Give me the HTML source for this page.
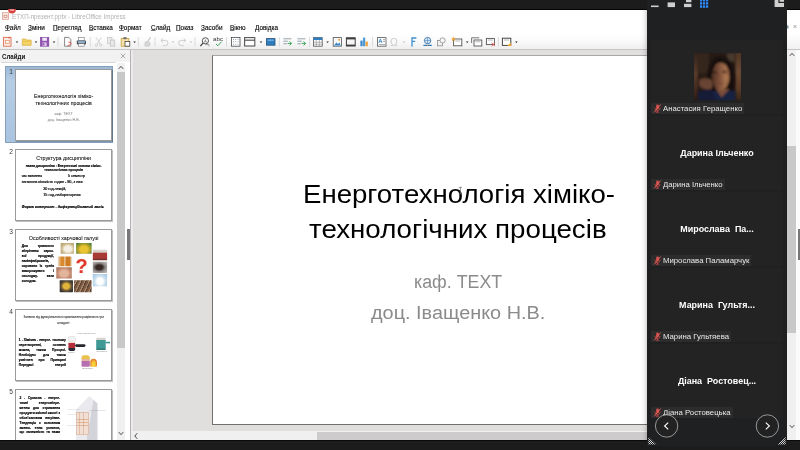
<!DOCTYPE html>
<html lang="uk">
<head>
<meta charset="utf-8">
<title>ЕТХП-презент.pptx - LibreOffice Impress</title>
<style>
html,body{margin:0;padding:0;}
body{width:800px;height:450px;overflow:hidden;background:#1c1c1c;position:relative;font-family:"Liberation Sans",sans-serif;}
.abs{position:absolute;}
#win{position:absolute;left:0;top:10px;width:800px;height:430px;background:#fff;overflow:hidden;}
#topline{position:absolute;left:0;top:9px;width:800px;height:1px;background:#050505;}
#botline{position:absolute;left:0;top:440px;width:800px;height:1px;background:#0a0a0a;}
/* coordinates inside #win are page y - 10 */
#title{position:absolute;left:12px;top:1.5px;font-size:6.9px;line-height:10px;color:#b2b2b2;white-space:nowrap;transform-origin:0 0;transform:scaleX(0.905);}
#menu{position:absolute;left:0;top:12px;width:647px;height:12px;font-size:6.4px;line-height:12px;color:#000;-webkit-text-stroke:0.12px #000;}
#menu span{position:absolute;top:0;white-space:nowrap;}
#menu u{text-decoration-thickness:0.4px;text-underline-offset:0.4px;text-decoration-color:#777;}
#tb{position:absolute;left:0;top:24px;width:800px;height:15px;background:linear-gradient(#ffffff,#fbfbfb 40%,#efefef);border-bottom:1px solid #c6c4c4;}
#tb svg{position:absolute;left:0;top:0;}
#work{position:absolute;left:131px;top:40px;width:669px;height:381px;background:#e1dfde;border-left:2px solid #ecebeb;box-sizing:border-box;}
#slide{position:absolute;left:212px;top:44.5px;width:470px;height:368px;background:#fff;border:1px solid #707070;border-top-color:#a8a6a6;box-sizing:content-box;}
.t1{position:absolute;white-space:nowrap;color:#000;font-size:26.6px;line-height:30px;transform-origin:0 0;}
.t2{position:absolute;white-space:nowrap;color:#8b8b8b;font-size:17.6px;line-height:20px;transform-origin:0 0;}
#hs{position:absolute;left:131px;top:421px;width:516px;height:9px;background:#f1f0f1;}
#hs .th{position:absolute;left:186px;top:1px;width:340px;height:8px;background:#cdcbcc;}
/* slide panel */
#sp{position:absolute;left:0;top:40px;width:130px;height:390px;background:#fff;border-right:1px solid #b4b2b2;}
#sph{position:absolute;left:0;top:0;width:130px;height:12px;background:#f3f2f2;}
#sph b{position:absolute;left:2px;top:1.5px;font-size:7.4px;line-height:10px;color:#111;transform-origin:0 0;transform:scaleX(0.83);}
#splist{position:absolute;left:1px;top:12px;width:115px;height:378px;background:#fff;border-top:1px solid #d8d8d8;}
#spsb{position:absolute;left:117px;top:13px;width:8px;height:377px;background:#f0f0f0;}
#spsb .th{position:absolute;left:0;top:9px;width:8px;height:276px;background:#c9c8c8;}
#grip{position:absolute;left:127px;top:179px;width:3px;height:31px;background:#77777a;}
.sel{position:absolute;left:5px;top:16px;width:108px;height:77px;background:linear-gradient(#9db9d6,#b6cde6 20%,#a9c4e0);border:1px solid #86a0bb;box-sizing:border-box;}
.th{box-sizing:border-box;}
.thumb{position:absolute;left:15px;width:97px;height:72.6px;background:#fff;border:1px solid #9a9a9a;box-sizing:border-box;overflow:hidden;box-shadow:0.5px 0.5px 0.5px rgba(0,0,0,.25);}
.num{position:absolute;left:7px;width:8px;font-size:6.6px;line-height:8px;color:#3a3a3a;text-align:center;}
.thumb div{position:absolute;white-space:nowrap;color:#000;transform-origin:0 0;}

.tc{position:absolute;left:0;top:0;width:480px;height:360px;transform:scale(0.1985);transform-origin:0 0;font-family:"Liberation Sans",sans-serif;}
.tc div{position:absolute;white-space:nowrap;color:#000;-webkit-text-stroke:0.9px currentColor;}
.tc .c{left:0;width:480px;text-align:center;}
.tc .ns{-webkit-text-stroke:0.25px currentColor;}
.tc .j{white-space:normal;text-align:justify;font-weight:bold;}
.tc .im{border-radius:2px;}
/* zoom panel */
#zp{position:absolute;left:647px;top:0;width:140px;height:446px;background:#1f2022;overflow:hidden;}
#zpsh{position:absolute;left:641px;top:10px;width:6px;height:430px;background:linear-gradient(90deg,rgba(0,0,0,0),rgba(0,0,0,0.04) 50%,rgba(0,0,0,0.16));}
.tile{position:absolute;left:4px;width:132px;height:74px;background:#232323;}
.nm{position:absolute;left:0;width:132px;text-align:center;font-weight:bold;font-size:8.95px;line-height:10px;color:#fff;white-space:pre;}
.lb{position:absolute;left:0;height:11px;background:#2c2c2c;color:#e9e9e9;font-size:7.75px;line-height:11px;white-space:nowrap;padding-left:12px;padding-right:2px;}
.lb svg{position:absolute;left:2px;top:1.3px;}
/* right strip */
#rs{position:absolute;left:787px;top:10px;width:13px;height:430px;background:#fff;}
html{background:#1c1c1c;}
#win,#zp,#rs{filter:blur(0.3px);}
</style>
</head>
<body>
<div id="topline"></div>
<div id="win">
  <!-- title bar -->
  <svg class="abs" style="left:1px;top:1px" width="16" height="11" viewBox="0 0 16 11">
    <rect x="1.5" y="1.7" width="6" height="6.6" fill="#fbeee9" stroke="#d9a090" stroke-width="0.8"/>
    <rect x="3" y="4.2" width="3" height="2.4" fill="none" stroke="#c9826f" stroke-width="0.7"/>
  </svg>
  <div id="title">ЕТХП-презент.pptx - LibreOffice Impress</div>
  <div id="menu">
    <span style="left:5px"><u>Ф</u>айл</span>
    <span style="left:28px"><u>З</u>міни</span>
    <span style="left:53px"><u>П</u>ерегляд</span>
    <span style="left:89px"><u>В</u>ставка</span>
    <span style="left:119px"><u>Ф</u>ормат</span>
    <span style="left:151px"><u>С</u>лайд</span>
    <span style="left:176px"><u>П</u>оказ</span>
    <span style="left:201px"><u>З</u>асоби</span>
    <span style="left:230px"><u>В</u>ікно</span>
    <span style="left:255px"><u>Д</u>овідка</span>
  </div>
  <div id="tb"><svg width="647" height="15" viewBox="0 0 647 15"><rect x="3.6" y="3.4" width="7.4" height="8.8" fill="#fdf1ec" stroke="#dc6a48" stroke-width="0.9"/><rect x="5.3" y="6.3" width="4" height="3.2" fill="none" stroke="#e08a6c" stroke-width="0.7"/><path d="M9 2.6 v2 M8 3.6 h2" stroke="#dc6a48" stroke-width="0.7"/><path d="M15.7 7.4 h2.6 l-1.3 1.5z" fill="#222"/><path d="M22.4 5 h3.2 l0.9 1.1 h4.6 v5.2 h-8.7z" fill="#f5d467" stroke="#d8a935" stroke-width="0.7"/><path d="M22.4 7.4 h8.7" stroke="#e3b849" stroke-width="0.6"/><path d="M34.7 7.4 h2.6 l-1.3 1.5z" fill="#222"/><rect x="40.4" y="3.4" width="8.4" height="8.8" fill="#9152b2" stroke="#7b3f9c" stroke-width="0.6"/><rect x="42.3" y="3.8" width="4.6" height="3" fill="#f3eaf7"/><rect x="42.6" y="8.4" width="4" height="3.6" fill="#e3cdee"/><rect x="43.2" y="9.2" width="1.2" height="2.2" fill="#7b3f9c"/><path d="M52.7 7.4 h2.6 l-1.3 1.5z" fill="#222"/><path d="M58 3 V12.5" stroke="#cfcfcf" stroke-width="0.7"/><path d="M64.6 3.4 h4.2 l2 2 v6.8 h-6.2z" fill="#fff" stroke="#6a6a6a" stroke-width="0.8"/><path d="M68.4 8.2 c2.6 -0.4 3 1.2 2 2.2 c-1 1 -2.6 0.8 -3 1.8" fill="none" stroke="#d9433f" stroke-width="0.9"/><rect x="78.6" y="3.4" width="5.6" height="3.4" fill="#fff" stroke="#777" stroke-width="0.6"/><rect x="76.8" y="6.4" width="9.2" height="4.2" rx="0.8" fill="#47525c"/><rect x="78" y="7.2" width="6.8" height="1.6" fill="#9cc6e6"/><rect x="78.6" y="9.6" width="5.6" height="2.6" fill="#f2f2f2" stroke="#666" stroke-width="0.5"/><path d="M90.3 3 V12.5" stroke="#cfcfcf" stroke-width="0.7"/><path d="M96 3.6 L100.4 10 M101.4 3.6 L97 10" stroke="#c6c6c6" stroke-width="0.8" fill="none"/><circle cx="96.6" cy="11" r="1.2" fill="none" stroke="#c6c6c6" stroke-width="0.7"/><circle cx="100.8" cy="11" r="1.2" fill="none" stroke="#c6c6c6" stroke-width="0.7"/><rect x="107.4" y="3.6" width="4.6" height="6" fill="#ececec" stroke="#c2c2c2" stroke-width="0.7"/><rect x="110.2" y="6" width="4.6" height="6.2" fill="#e6e6e6" stroke="#bdbdbd" stroke-width="0.7"/><rect x="121.2" y="4.4" width="7.6" height="7.8" fill="#f6e3a8" stroke="#c9a03c" stroke-width="0.8"/><rect x="123.4" y="3.2" width="3.2" height="2" fill="#6b6b6b"/><rect x="125" y="7.4" width="4.8" height="4.8" fill="#fff" stroke="#444" stroke-width="0.8"/><path d="M133.29999999999998 7.4 h2.6 l-1.3 1.5z" fill="#222"/><path d="M138.3 3 V12.5" stroke="#cfcfcf" stroke-width="0.7"/><path d="M150.6 3.4 L147.6 7.4" stroke="#c4c4c4" stroke-width="1.1"/><path d="M145 8 l3.4 -0.8 l2 2.2 l-1 2.8 h-4.6z" fill="#d6d6d6" stroke="#c0c0c0" stroke-width="0.5"/><path d="M155 3 V12.5" stroke="#cfcfcf" stroke-width="0.7"/><path d="M161 6.4 h4.4 a2.6 2.6 0 0 1 0 5.2 h-2.6" fill="none" stroke="#c9c9c9" stroke-width="0.9"/><path d="M163 4.4 L160.8 6.4 L163 8.4" fill="none" stroke="#c9c9c9" stroke-width="0.9"/><path d="M171.7 7.4 h2.6 l-1.3 1.5z" fill="#bdbdbd"/><path d="M185.6 6.4 h-4.4 a2.6 2.6 0 0 0 0 5.2 h2.6" fill="none" stroke="#c9c9c9" stroke-width="0.9"/><path d="M183.6 4.4 L185.8 6.4 L183.6 8.4" fill="none" stroke="#c9c9c9" stroke-width="0.9"/><path d="M189.7 7.4 h2.6 l-1.3 1.5z" fill="#bdbdbd"/><path d="M195 3 V12.5" stroke="#cfcfcf" stroke-width="0.7"/><circle cx="205.4" cy="6.8" r="3.1" fill="#fff" stroke="#3e3e3e" stroke-width="0.9"/><path d="M203 9.2 L200.4 12.2" stroke="#3e3e3e" stroke-width="1.2"/><path d="M204.4 8.6 l1 -3 l1 3 M204.8 7.6 h1.4" stroke="#555" stroke-width="0.5" fill="none"/><path d="M205.6 10.6 h3.4 v1.8" fill="none" stroke="#666" stroke-width="0.6"/><text x="213" y="7.2" font-size="5.6" font-family="Liberation Sans, sans-serif" fill="#333" textLength="10" lengthAdjust="spacingAndGlyphs">abc</text><path d="M216 10 l1.8 1.8 l3.6 -4" fill="none" stroke="#3aa657" stroke-width="1"/><path d="M226.5 3 V12.5" stroke="#cfcfcf" stroke-width="0.7"/><rect x="231.4" y="3.4" width="8.6" height="8.8" fill="#fff" stroke="#4a4a4a" stroke-width="0.8"/><g fill="#6a7a90"><rect x="233" y="5" width="0.8" height="0.8"/><rect x="235.3" y="5" width="0.8" height="0.8"/><rect x="237.6" y="5" width="0.8" height="0.8"/><rect x="233" y="7.4" width="0.8" height="0.8"/><rect x="235.3" y="7.4" width="0.8" height="0.8"/><rect x="237.6" y="7.4" width="0.8" height="0.8"/><rect x="233" y="9.8" width="0.8" height="0.8"/><rect x="235.3" y="9.8" width="0.8" height="0.8"/><rect x="237.6" y="9.8" width="0.8" height="0.8"/></g><rect x="244.6" y="3.6" width="10.2" height="8.4" fill="#fff" stroke="#555" stroke-width="1.1"/><rect x="244.6" y="5.6" width="10.2" height="1.2" fill="#555"/><path d="M259.7 7.4 h2.6 l-1.3 1.5z" fill="#222"/><rect x="266.4" y="4.6" width="8.6" height="6.6" fill="#2f7fc0" stroke="#274f73" stroke-width="0.8"/><rect x="267.6" y="5.6" width="6.2" height="1.2" fill="#7db7e6"/><path d="M279.3 3 V12.5" stroke="#cfcfcf" stroke-width="0.7"/><path d="M283.4 4.8 h8 M283.4 7.2 h4.4 M283.4 9.8 h3.4" stroke="#7e8a96" stroke-width="0.8"/><path d="M287.59999999999997 9.4 h3.6 M289.59999999999997 7.4 l2 2 l-2 2" fill="none" stroke="#3aa657" stroke-width="1"/><path d="M297.4 4.8 h8 M297.4 7.2 h4.4 M297.4 9.8 h3.4" stroke="#7e8a96" stroke-width="0.8"/><path d="M301.59999999999997 9.4 h3.6 M303.59999999999997 7.4 l2 2 l-2 2" fill="none" stroke="#3aa657" stroke-width="1"/><path d="M309.6 3 V12.5" stroke="#cfcfcf" stroke-width="0.7"/><rect x="313.4" y="3.6" width="8.8" height="8.6" fill="#fff" stroke="#555" stroke-width="0.8"/><rect x="313.4" y="3.6" width="8.8" height="2.4" fill="#2f7fc0"/><path d="M316.3 6 V12.2 M319.3 6 V12.2 M313.4 8.2 h8.8 M313.4 10.2 h8.8" stroke="#777" stroke-width="0.5"/><path d="M326.3 7.4 h2.6 l-1.3 1.5z" fill="#222"/><rect x="333.2" y="3.6" width="8.2" height="8.6" fill="#f7f7f7" stroke="#555" stroke-width="0.8"/><path d="M334 11.4 l2.4 -3 l1.6 1.6 l1.4 -1.4 l1.4 2.8z" fill="#3b88c8"/><circle cx="339.2" cy="5.8" r="1" fill="#f0a030"/><rect x="346.4" y="3.8" width="8.8" height="8.2" fill="#f4f4f4" stroke="#3c3c3c" stroke-width="1"/><rect x="346.4" y="3.8" width="8.8" height="1.6" fill="#3c3c3c"/><rect x="346.4" y="10.6" width="8.8" height="1.4" fill="#3c3c3c"/><rect x="360.4" y="6.6" width="2.2" height="5.6" fill="#3b88c8"/><rect x="363" y="3.6" width="2.2" height="8.6" fill="#4e9ad6"/><rect x="365.6" y="7.6" width="2.2" height="4.6" fill="#f0a030"/><path d="M372.6 3 V12.5" stroke="#cfcfcf" stroke-width="0.7"/><rect x="377.4" y="3.6" width="8.6" height="8.6" fill="#fff" stroke="#555" stroke-width="0.8"/><path d="M378.8 9 l1.6 -4.2 l1.6 4.2 M379.4 7.6 h2" fill="none" stroke="#2f7fc0" stroke-width="0.8"/><path d="M383 5.6 h2 M383 7.4 h2 M378.8 10.6 h6.2" stroke="#666" stroke-width="0.6"/><text x="390" y="12" font-size="10.5" font-family="Liberation Sans, sans-serif" fill="#cbcbcb">Ω</text><path d="M402.7 7.4 h2.6 l-1.3 1.5z" fill="#bdbdbd"/><path d="M412 12.2 V4 h4.4 M412 7.4 h3.2" fill="none" stroke="#3d8fcd" stroke-width="1.3"/><path d="M411 12.4 h2.4" stroke="#8fbfe4" stroke-width="0.7"/><circle cx="427.6" cy="6.6" r="3.2" fill="#dceaf6" stroke="#2f6ea8" stroke-width="0.8"/><path d="M424.4 6.6 h6.4 M427.6 3.4 v6.4" stroke="#2f6ea8" stroke-width="0.5"/><path d="M423.4 11.4 h3.6 M428 11.4 h3.8" stroke="#2f7fc0" stroke-width="1.3"/><path d="M426 11.4 h3" stroke="#555" stroke-width="0.6"/><rect x="437.4" y="6.4" width="5" height="5.4" fill="#f2f2f2" stroke="#8c8c8c" stroke-width="0.8"/><circle cx="442.6" cy="6.4" r="2.6" fill="#f7f7f7" stroke="#8c8c8c" stroke-width="0.8"/><rect x="453.6" y="5" width="8.2" height="6.8" fill="#fff" stroke="#555" stroke-width="0.9"/><path d="M455.4 7 h4.6" stroke="#888" stroke-width="0.6"/><path d="M453.4 2.6 l0.7 1.6 l1.7 0.2 l-1.3 1.1 l0.4 1.7 l-1.5 -0.9 l-1.5 0.9 l0.4 -1.7 l-1.3 -1.1 l1.7 -0.2z" fill="#f0a030"/><path d="M465.9 7.4 h2.6 l-1.3 1.5z" fill="#222"/><path d="M471.6 9 V3.8 h7.6" fill="none" stroke="#555" stroke-width="0.8"/><rect x="474" y="6" width="7.8" height="6" fill="#fff" stroke="#555" stroke-width="0.9"/><path d="M475.4 7.8 h5" stroke="#888" stroke-width="0.6"/><rect x="486.4" y="4.4" width="8" height="6.2" fill="#fff" stroke="#555" stroke-width="0.9"/><path d="M488 6 h4.8" stroke="#888" stroke-width="0.6"/><path d="M491.6 8.8 l3.4 3.4 M495 8.8 l-3.4 3.4" stroke="#d9433f" stroke-width="0.9"/><path d="M498.4 3 V12.5" stroke="#cfcfcf" stroke-width="0.7"/><rect x="502.4" y="4.2" width="8.4" height="7.2" fill="#fff" stroke="#444" stroke-width="1"/><path d="M504 6 h5" stroke="#888" stroke-width="0.6"/><path d="M511.2 8.4 v3.6 h-4z" fill="#f0a030"/><path d="M515.1 7.4 h2.6 l-1.3 1.5z" fill="#222"/></svg></div>
  <div id="work"></div>
  <div id="slide"></div>
  <div class="t1" id="l1" style="left:302.5px;top:168.5px;transform:scaleX(1.038)">Енерготехнологія хіміко-</div>
  <div class="t1" id="l2" style="left:309px;top:204px;transform:scaleX(1.042)">технологічних процесів</div>
  <div class="t2" id="l3" style="left:413.5px;top:261.5px;transform:scaleX(1.012)">каф. ТЕХТ</div>
  <div class="t2" id="l4" style="left:371px;top:292.5px;transform:scaleX(1.13)">доц. Іващенко Н.В.</div>
  <svg class="abs" style="left:458px;top:176px" width="5" height="9" viewBox="0 0 5 9"><path d="M0.8 1.4 H4 M0.8 7.6 H4 M2.4 1.4 V7.6" stroke="#6a6a6a" stroke-width="0.7" fill="none"/></svg>
  <div id="hs"><div class="th"></div>
    <svg class="abs" style="left:2px;top:1px" width="6" height="8" viewBox="0 0 6 8"><path d="M4.2 1.2 L1.8 4 L4.2 6.8" fill="none" stroke="#333" stroke-width="0.9"/></svg>
  </div>
  <div id="sp">
    <div id="sph"><b>Слайди</b>
      <svg class="abs" style="left:120px;top:3px" width="6" height="6" viewBox="0 0 6 6"><path d="M0.8 0.8 L5.2 5.2 M5.2 0.8 L0.8 5.2" stroke="#8a8a8a" stroke-width="0.7"/></svg>
    </div>
    <div id="splist"></div>
    <div id="spsb"><div class="th"></div>
      <svg class="abs" style="left:1px;top:2px" width="6" height="5" viewBox="0 0 6 5"><path d="M0.8 3.8 L3 1.4 L5.2 3.8" fill="none" stroke="#333" stroke-width="0.9"/></svg>
      <svg class="abs" style="left:1px;top:368px" width="6" height="5" viewBox="0 0 6 5"><path d="M0.8 1.2 L3 3.6 L5.2 1.2" fill="none" stroke="#333" stroke-width="0.9"/></svg>
    </div>
    <div id="grip"></div>
    <div class="sel"></div><div class="num" style="top:17.5px">1</div><div class="thumb" style="top:18.5px"><div class="tc"><div class="c ns" style="top:112px;font-size:26.4px;line-height:36px;">Енерготехнологія хіміко-<br>технологічних процесів</div>
<div class="c ns" style="top:203px;font-size:18.4px;line-height:31px;color:#8b8b8b">каф. ТЕХТ<br>доц. Іващенко Н.В.</div></div></div><div class="num" style="top:97.5px">2</div><div class="thumb" style="top:98.5px"><div class="tc"><div class="c ns" style="top:24px;font-size:27px;line-height:32px;">Структура дисципліни</div>
<div class="c" style="top:68px;font-size:16.5px;line-height:23px;font-weight:bold">назва дисципліни : Енергетичні основи хіміко-<br>технологічних процесів</div>
<div style="left:29px;top:122px;font-size:16.5px;line-height:20px">час вивчення</div><div style="left:262px;top:122px;font-size:18.5px;line-height:20px">5 семестр</div>
<div style="left:29px;top:152px;font-size:19px;line-height:20px">загальна кількість годин - 90, з них:</div>
<div style="left:137px;top:183px;font-size:18.3px;line-height:20px">30 год.лекцій,</div>
<div style="left:137px;top:214px;font-size:19.5px;line-height:20px">15 год.лабораторних</div>
<div style="left:29px;top:274px;font-size:18.6px;line-height:20px;font-weight:bold;font-style:italic">Форма контролю - диференційований залік.</div></div></div><div class="num" style="top:177.5px">3</div><div class="thumb" style="top:178.5px"><div class="tc"><div class="c ns" style="top:24px;font-size:27px;line-height:32px;">Особливості харчової галузі</div>
<div class="j" style="left:29px;top:68px;width:162px;font-size:16px;line-height:25px;text-align-last:justify">Для тривалого зберігання харчо- вої продукції, напівфабрикатів, сировини їх треба заморожувати і охолоджу- вати холодом.</div>
<div class="im" style="left:225px;top:65px;width:67px;height:55px;background:radial-gradient(ellipse at 55% 55%,#f4efe2 0 35%,#cdb98c 60%,#a99766)"></div>
<div class="im" style="left:303px;top:65px;width:78px;height:55px;background:radial-gradient(ellipse at 50% 60%,#e8c530 0 35%,#b8a328 55%,#5f8a3a 80%,#3f6b2a)"></div>
<div class="im" style="left:387px;top:99px;width:72px;height:54px;background:linear-gradient(#d9d2cc 0 25%,#a83a35 30% 75%,#6d2a28)"></div>
<div class="im" style="left:211px;top:133px;width:70px;height:50px;background:linear-gradient(90deg,#e9dccb,#d98a2c 25% 45%,#f0e2cf 50%,#cf7c24 58% 85%,#ead9c4)"></div>
<div style="left:300px;top:128px;font-size:100px;line-height:104px;font-weight:bold;color:#e03a2c">?</div>
<div class="im" style="left:387px;top:160px;width:72px;height:56px;background:radial-gradient(ellipse at 45% 50%,#3a2a26 0 30%,#8d8a88 55%,#c9c6c2)"></div>
<div class="im" style="left:203px;top:188px;width:78px;height:56px;background:radial-gradient(ellipse at 50% 55%,#e2b49c 0 35%,#c98d72 60%,#8b6a55)"></div>
<div class="im" style="left:387px;top:222px;width:72px;height:61px;background:radial-gradient(ellipse at 50% 60%,#ffffff 0 30%,#c9dfee 55%,#9cc2df)"></div>
<div class="im" style="left:220px;top:253px;width:67px;height:60px;background:radial-gradient(ellipse at 50% 50%,#e2b53a 0 32%,#7a6238 50%,#3a3430 75%)"></div>
<div class="im" style="left:292px;top:253px;width:89px;height:60px;background:repeating-linear-gradient(115deg,#7b5a43 0 9px,#a98467 9px 15px,#5b4334 15px 20px)"></div></div></div><div class="num" style="top:257.5px">4</div><div class="thumb" style="top:258.5px"><div class="tc"><div class="c ns" style="top:24px;font-size:14.6px;line-height:27px;color:#222">Залежно від функціонального призначення розрізняють три<br>складові :</div>
<div class="j" style="left:14px;top:140px;width:237px;font-size:16.5px;line-height:25px;text-align-last:justify">1 . Хімічна - енерге- тичному перетворенні, останнє можна, таким Процесі. Необхідно для також усвітлен при Принципі Передачі енергії</div>
<div class="c" style="left:300px;width:110px;top:116px;font-size:8px;line-height:9px;color:#777;white-space:normal;-webkit-text-stroke:0">Спосіб термічний енергії</div>
<div style="left:262px;top:132px;width:36px;height:24px;border-radius:12px 12px 4px 4px;background:#f4f2f2;border:1px solid #999"></div>
<div style="left:264px;top:156px;width:34px;height:50px;border-radius:8px;background:linear-gradient(#f0e0dc 0 20%,#b32d3a 25% 70%,#2b2b33 75%)"></div>
<div style="left:298px;top:172px;width:52px;height:14px;border-radius:7px;background:#26262c"></div>
<div style="left:404px;top:140px;width:48px;height:62px;border-radius:6px;background:linear-gradient(#d9d4cf 0 18%,#3f9a96 22% 80%,#2a6f6c)"></div>
<div style="left:452px;top:160px;width:22px;height:8px;background:#3f9a96"></div>
<div style="left:330px;top:228px;width:42px;height:58px;border-radius:14px 14px 6px 6px;background:linear-gradient(#e8c24a 0 30%,#e6b7a0 32% 48%,#b76fb0 52%)"></div>
<div style="left:374px;top:246px;width:34px;height:40px;border-radius:50% 50% 20% 20%;background:radial-gradient(ellipse at 50% 70%,#f7d23a 0 30%,#e9892b 60%,#c4571f)"></div>
<div style="left:262px;top:212px;font-size:7px;line-height:8px;color:#777;-webkit-text-stroke:0">конвекція</div><div style="left:404px;top:208px;font-size:7px;line-height:8px;color:#777;-webkit-text-stroke:0">теплопровідність</div><div style="left:334px;top:292px;font-size:7px;line-height:8px;color:#777;-webkit-text-stroke:0">випромінювання</div></div></div><div class="num" style="top:337.5px">5</div><div class="thumb" style="top:338.5px"><div class="tc"><div class="j" style="left:18px;top:26px;width:204px;font-size:16.5px;line-height:25px;text-align-last:justify">2 . Сучасна - енерге- тичні енергозбере- ження для отримання продукти якісної якості з обов’язковим нагріван. Тенденція з основним зменш- ення установ, що залежність та нами</div>
<div style="left:300px;top:30px;width:112px;height:330px;background:linear-gradient(100deg,#e9e9ee 0 55%,#d3d3da 56%);clip-path:polygon(0 22%,62% 0,100% 12%,100% 100%,0 100%)"></div>
<div style="left:305px;top:112px;width:58px;height:110px;background:repeating-linear-gradient(#e2b190 0 3px,#f3dfd2 3px 16px),#f3dfd2;border:2px solid #c98a62;opacity:.9"></div>
<div style="left:318px;top:112px;width:2px;height:110px;background:#c98a62"></div><div style="left:340px;top:112px;width:2px;height:110px;background:#c98a62"></div>
<div style="left:258px;top:96px;width:60px;height:1px;background:#999"></div><div style="left:258px;top:124px;width:50px;height:1px;background:#999"></div><div style="left:258px;top:178px;width:50px;height:1px;background:#999"></div><div style="left:370px;top:104px;width:82px;height:1px;background:#777"></div></div></div>
  </div>
</div>
<div id="botline"></div>
<div id="zpsh"></div>
<svg class="abs" style="left:8px;top:9px" width="9" height="5" viewBox="0 0 9 5"><circle cx="4" cy="0.7" r="3.8" fill="#d9433f"/><rect x="1.9" y="0.5" width="4.2" height="1.2" fill="#f3c4c2"/></svg>
<div id="rs">
  <div class="abs" style="left:0;top:0;width:13px;height:39px;background:linear-gradient(#fff 60%,#f1f1f1)"></div>
  <svg class="abs" style="left:0;top:12px" width="13" height="10" viewBox="0 0 13 10"><path d="M6.6 3 L9.4 6 M9.4 3 L6.6 6" stroke="#777" stroke-width="0.6"/><path d="M0 3 a1.6 1.6 0 0 1 1.6 1.6 V6.4 H0 Z" fill="#8aa0a8"/></svg>
  <div class="abs" style="left:0;top:39px;width:13px;height:1px;background:#c6c4c4"></div>
  <div class="abs" style="left:0;top:40px;width:9px;height:390px;background:#f0f0f0"></div>
  <div class="abs" style="left:0;top:136px;width:9px;height:187px;background:#c9c8c8"></div>
  <div class="abs" style="left:9px;top:40px;width:4px;height:390px;background:#fbfbfb"></div>
  <div class="abs" style="left:10.5px;top:219px;width:3px;height:31px;background:#77777a"></div>
  <svg class="abs" style="left:1.5px;top:42px" width="6" height="5" viewBox="0 0 6 5"><path d="M0.8 3.8 L3 1.4 L5.2 3.8" fill="none" stroke="#333" stroke-width="0.9"/></svg>
  <svg class="abs" style="left:1.5px;top:414px" width="6" height="5" viewBox="0 0 6 5"><path d="M0.8 1.2 L3 3.6 L5.2 1.2" fill="none" stroke="#333" stroke-width="0.9"/></svg>
</div>
<div id="zp">
  <svg class="abs" style="left:0;top:0" width="140" height="10" viewBox="0 0 140 10">
    <rect x="4" y="5.5" width="7.6" height="1.6" fill="#cfcfcf"/>
    <rect x="20.6" y="2.4" width="7.4" height="4.7" fill="#cfcfcf"/>
    <rect x="39" y="-1" width="5.4" height="3.2" fill="#cfcfcf"/><rect x="37" y="3.8" width="7.4" height="3.3" fill="#cfcfcf"/>
    <g fill="#2d8cff"><rect x="53" y="-1" width="2.2" height="2.4"/><rect x="56" y="-1" width="2.2" height="2.4"/><rect x="59" y="-1" width="2.2" height="2.4"/>
    <rect x="53" y="2.2" width="2.2" height="2.4"/><rect x="56" y="2.2" width="2.2" height="2.4"/><rect x="59" y="2.2" width="2.2" height="2.4"/>
    <rect x="53" y="5.4" width="2.2" height="2.4"/><rect x="56" y="5.4" width="2.2" height="2.4"/><rect x="59" y="5.4" width="2.2" height="2.4"/></g>
    <path d="M127.6 -1 H131.4 V3 H137 V7 H127.6 Z" fill="#cfcfcf"/><rect x="132.6" y="-1" width="4.4" height="2.8" fill="#cfcfcf"/>
  </svg>
  <div class="tile" style="top:40px"><svg class="abs" style="left:43px;top:13px" width="47" height="47.5" viewBox="0 0 47 47.5">
<defs>
<filter id="bl" x="-10%" y="-10%" width="120%" height="120%"><feGaussianBlur stdDeviation="0.9"/></filter>
<filter id="bl2" x="-10%" y="-10%" width="120%" height="120%"><feGaussianBlur stdDeviation="1.6"/></filter>
<linearGradient id="ls" x1="0" y1="0" x2="0" y2="1"><stop offset="0" stop-color="#32241d"/><stop offset="0.45" stop-color="#5a3c2b"/><stop offset="0.8" stop-color="#40281c"/><stop offset="1" stop-color="#261813"/></linearGradient>
<linearGradient id="rsg" x1="0" y1="0" x2="0" y2="1"><stop offset="0" stop-color="#4c3424"/><stop offset="0.4" stop-color="#6e4a32"/><stop offset="0.75" stop-color="#5a3a26"/><stop offset="1" stop-color="#332016"/></linearGradient>
<linearGradient id="fc" x1="0" y1="0" x2="1" y2="0"><stop offset="0" stop-color="#4a2d22"/><stop offset="0.4" stop-color="#7c4f38"/><stop offset="0.78" stop-color="#a5714c"/><stop offset="1" stop-color="#8a5a3c"/></linearGradient>
<clipPath id="pc"><rect x="0" y="0" width="47" height="47.5"/></clipPath>
</defs>
<g clip-path="url(#pc)">
<rect x="0" y="0" width="47" height="47.5" fill="#261a15"/>
<g filter="url(#bl2)">
<rect x="3" y="0" width="12" height="22" fill="#35271f"/>
<rect x="33" y="0" width="8" height="9" fill="#4a3a2e"/>
<rect x="3.8" y="20" width="9" height="16" fill="#2a1e19"/>
</g>
<rect x="-1" y="-1" width="4.8" height="50" fill="url(#ls)" filter="url(#bl)"/>
<rect x="41.4" y="-1" width="7" height="50" fill="url(#rsg)" filter="url(#bl)"/>
<g filter="url(#bl)">
<path d="M10.5 38 C12 24 15 8 23 4.4 C29 2.6 35.5 5.5 38.5 13 C41 21 40.5 30 39.8 38 Z" fill="#17100e"/>
<path d="M4 38 H41.4 V48 H4 Z" fill="#162143"/>
<path d="M4 40 C8 36.5 14 36 18 38 L22 48 H4 Z" fill="#121b38"/>
<path d="M22 36 L27.5 44.5 L35.5 36 Z" fill="#7a4e38"/>
<ellipse cx="26.6" cy="23.4" rx="9" ry="14" fill="url(#fc)"/>
<path d="M15.5 19 C17 10 22 6 26 7 C22 9 19 14 18 22 Z" fill="#17100e"/>
<path d="M26 7 C31 6 36 10 37 20 C34 13 31 10 26 9.5 Z" fill="#1c1411"/>
<path d="M5 27 C8 24.5 13 25 16.5 26.5 C19 28 19 33 17.5 36 C13 37 8 36 5.4 33 Z" fill="#6a4434"/>
<path d="M6 28 C9 27 12 27.5 14 29" stroke="#5e3a2a" stroke-width="0.9" fill="none"/>
<ellipse cx="20.8" cy="19.4" rx="2.6" ry="1.1" fill="#3a241b"/>
<ellipse cx="30.6" cy="18.8" rx="2.8" ry="1.1" fill="#4a2e20"/>
<path d="M24.5 20 C24 24 23.4 26.5 24.8 27.6" stroke="#6a412c" stroke-width="1" fill="none"/>
<ellipse cx="26.2" cy="30.6" rx="2.8" ry="1" fill="#7a4636"/>
<ellipse cx="32.4" cy="25" rx="2.6" ry="3.6" fill="#b07c54" opacity="0.5"/>
</g>
<path d="M19 44.2 h5" stroke="#8fa0c8" stroke-width="0.7" opacity="0.7" filter="url(#bl)"/>
</g>
</svg><div class="lb" style="top:62.5px"><svg width="9" height="9" viewBox="0 0 9 9"><rect x="3.2" y="0.6" width="2.6" height="4.6" rx="1.3" fill="#e0524f"/><path d="M1.9 3.8 a2.6 2.6 0 0 0 5.2 0" fill="none" stroke="#d84845" stroke-width="0.8"/><path d="M4.5 6.4 V8 M3 8.2 H6" stroke="#d84845" stroke-width="0.8"/><path d="M7.6 0.6 L1.2 8.4" stroke="#e8605c" stroke-width="1"/></svg>Анастасия Геращенко</div></div>
  <div class="tile" style="top:116px"><div class="nm" style="top:31.8px">Дарина Ільченко</div><div class="lb" style="top:62.5px"><svg width="9" height="9" viewBox="0 0 9 9"><rect x="3.2" y="0.6" width="2.6" height="4.6" rx="1.3" fill="#e0524f"/><path d="M1.9 3.8 a2.6 2.6 0 0 0 5.2 0" fill="none" stroke="#d84845" stroke-width="0.8"/><path d="M4.5 6.4 V8 M3 8.2 H6" stroke="#d84845" stroke-width="0.8"/><path d="M7.6 0.6 L1.2 8.4" stroke="#e8605c" stroke-width="1"/></svg>Дарина Ільченко</div></div>
  <div class="tile" style="top:192px"><div class="nm" style="top:31.8px">Мирослава  Па...</div><div class="lb" style="top:62.5px"><svg width="9" height="9" viewBox="0 0 9 9"><rect x="3.2" y="0.6" width="2.6" height="4.6" rx="1.3" fill="#e0524f"/><path d="M1.9 3.8 a2.6 2.6 0 0 0 5.2 0" fill="none" stroke="#d84845" stroke-width="0.8"/><path d="M4.5 6.4 V8 M3 8.2 H6" stroke="#d84845" stroke-width="0.8"/><path d="M7.6 0.6 L1.2 8.4" stroke="#e8605c" stroke-width="1"/></svg>Мирослава Паламарчук</div></div>
  <div class="tile" style="top:268px"><div class="nm" style="top:31.8px">Марина  Гультя...</div><div class="lb" style="top:62.5px"><svg width="9" height="9" viewBox="0 0 9 9"><rect x="3.2" y="0.6" width="2.6" height="4.6" rx="1.3" fill="#e0524f"/><path d="M1.9 3.8 a2.6 2.6 0 0 0 5.2 0" fill="none" stroke="#d84845" stroke-width="0.8"/><path d="M4.5 6.4 V8 M3 8.2 H6" stroke="#d84845" stroke-width="0.8"/><path d="M7.6 0.6 L1.2 8.4" stroke="#e8605c" stroke-width="1"/></svg>Марина Гультяева</div></div>
  <div class="tile" style="top:344px"><div class="nm" style="top:31.8px">Діана  Ростовец...</div><div class="lb" style="top:62.5px"><svg width="9" height="9" viewBox="0 0 9 9"><rect x="3.2" y="0.6" width="2.6" height="4.6" rx="1.3" fill="#e0524f"/><path d="M1.9 3.8 a2.6 2.6 0 0 0 5.2 0" fill="none" stroke="#d84845" stroke-width="0.8"/><path d="M4.5 6.4 V8 M3 8.2 H6" stroke="#d84845" stroke-width="0.8"/><path d="M7.6 0.6 L1.2 8.4" stroke="#e8605c" stroke-width="1"/></svg>Діана Ростовецька</div></div>
  <svg class="abs" style="left:6px;top:413px;overflow:visible" width="128" height="34" viewBox="0 0 128 34">
    <circle cx="13.6" cy="13" r="11.2" fill="#222222" stroke="#c9c9c9" stroke-width="0.7"/>
    <path d="M15.2 9.6 L11.6 13 L15.2 16.4" fill="none" stroke="#fff" stroke-width="1.1"/>
    <circle cx="114.4" cy="13" r="11.2" fill="#222222" stroke="#c9c9c9" stroke-width="0.7"/>
    <path d="M112.8 9.6 L116.4 13 L112.8 16.4" fill="none" stroke="#fff" stroke-width="1.1"/>
    <defs><pattern id="chk" width="2" height="2" patternUnits="userSpaceOnUse"><rect width="1" height="1" fill="#d8d8d8"/><rect x="1" y="1" width="1" height="1" fill="#d8d8d8"/></pattern></defs><path d="M-4.6 24 L3.4 31.4 H-4.6Z" fill="url(#chk)"/><path d="M132.6 24 L124.6 31.4 H132.6Z" fill="url(#chk)"/>
  </svg>
</div>
</body>
</html>
